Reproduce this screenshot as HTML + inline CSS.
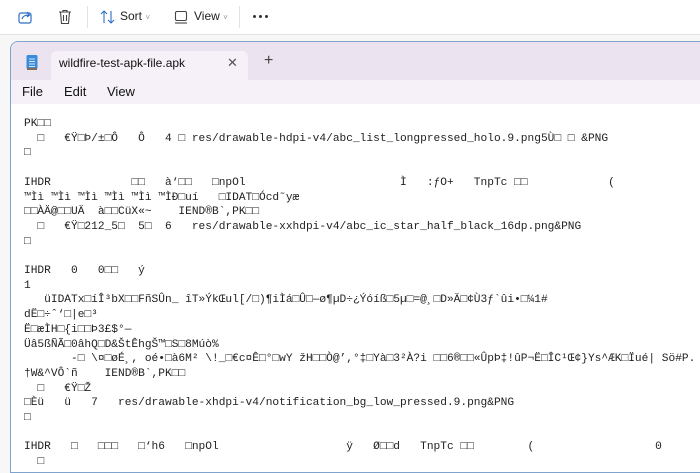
<!DOCTYPE html>
<html><head><meta charset="utf-8"><style>
body{margin:0;width:700px;height:466px;overflow:hidden;background:#f7f7f7;font-family:"Segoe UI","Liberation Sans",sans-serif;position:relative}
.tb{position:absolute;left:0;top:0;width:700px;height:34px;background:#fff;border-bottom:1px solid #e3e3e3}
.tb span{position:absolute;top:9px;font-size:12px;color:#222}
.win{position:absolute;left:10px;top:41px;width:700px;height:430px;border:1px solid #7fa3cc;border-radius:8px 0 0 0;background:#fff;overflow:hidden}
.title{height:38px;background:#ebe3f0}
.tab{position:absolute;left:40px;top:9px;width:197px;height:30px;background:#f6f1f8;border-radius:6px 6px 0 0}
.menu{position:absolute;top:38px;left:0;width:700px;height:24px;background:#f6f1f8;font-size:13px;color:#111}
.menu span{position:absolute;top:4px}
pre{position:absolute;left:13px;top:75px;margin:0;font-family:"Liberation Mono","DejaVu Sans Mono",monospace;font-size:11.2px;line-height:14.7px;color:#222;white-space:pre}
.dot{position:absolute;top:15px;width:3px;height:3px;border-radius:50%;background:#333}
</style></head><body>
<div class="tb">
<svg style="position:absolute;left:17px;top:9px" width="16" height="16" viewBox="0 0 16 16" fill="none" stroke="#2d6fc4" stroke-width="1.2"><rect x="2" y="4" width="12" height="10" rx="2"/><path d="M5 10c1-3 3-4 7-4M10 3l2.5 3L10 8"/></svg>
<svg style="position:absolute;left:58px;top:9px" width="14" height="16" viewBox="0 0 14 16" fill="none" stroke="#444" stroke-width="1.1"><path d="M1 3h12M5 3V1.5h4V3M2.5 3l1 11.5h7l1-11.5M5.5 6v6M8.5 6v6"/></svg>
<div style="position:absolute;left:87px;top:6px;width:1px;height:22px;background:#e3e3e3"></div>
<svg style="position:absolute;left:100px;top:10px" width="16" height="14" viewBox="0 0 16 14" fill="none" stroke="#2d6fc4" stroke-width="1.1"><path d="M4 13V1M1 4l3-3 3 3M11 1v12M8 10l3 3 3-3"/></svg>
<span style="left:120px">Sort <small style="color:#999;font-size:8px">˅</small></span>
<svg style="position:absolute;left:174px;top:10px" width="14" height="14" viewBox="0 0 14 14" fill="none" stroke="#444" stroke-width="1.1"><rect x="1.5" y="1.5" width="11" height="9" rx="1.5"/><path d="M1 13h12"/></svg>
<span style="left:194px">View <small style="color:#999;font-size:8px">˅</small></span>
<div style="position:absolute;left:239px;top:6px;width:1px;height:22px;background:#e3e3e3"></div>
<div class="dot" style="left:253px"></div><div class="dot" style="left:259px"></div><div class="dot" style="left:265px"></div>
</div>
<div class="win">
<div class="title"></div>
<svg style="position:absolute;left:15px;top:12px" width="12" height="16" viewBox="0 0 12 16"><rect x="0.5" y="1" width="11" height="14" rx="1.5" fill="#3a8bd8"/><path d="M3 5h6M3 7.5h6M3 10h6M3 12.5h6" stroke="#cde4fa" stroke-width="1"/><rect x="1" y="14" width="10" height="2" fill="#8a6a50"/></svg>
<div class="tab"><span style="position:absolute;left:8px;top:5px;font-size:12px;color:#111">wildfire-test-apk-file.apk</span><span style="position:absolute;left:176px;top:4px;font-size:13px;color:#555">✕</span></div>
<span style="position:absolute;left:253px;top:10px;font-size:16px;color:#444">+</span>
<div class="menu"><span style="left:11px">File</span><span style="left:53px">Edit</span><span style="left:96px">View</span></div>
<pre>PK□□
  □   €Ÿ□Þ/±□Ô   Ô   4 □ res/drawable-hdpi-v4/abc_list_longpressed_holo.9.png5Ù□ □ &amp;PNG
□

IHDR            □□   à‘□□   □npOl                       Ì   :ƒO+   TnpTc □□            (
™Ìì ™Ìì ™Ìì ™Ìì ™Ìì ™ÌÐ□uí   □IDAT□Ócd˜yæ
□□ÀÄ@□□UÄ  à□□CüX«~    IEND®B`,PK□□
  □   €Ÿ□212_5□  5□  6   res/drawable-xxhdpi-v4/abc_ic_star_half_black_16dp.png&amp;PNG
□

IHDR   0   0□□   ý
1
   üIDATx□íÎ³bX□□FñSÛn_ îT»ÝkŒul[/□)¶iÌá□Û□—ø¶µD÷¿Ýóíß□5µ□=@¸□D»Ä□¢Ù3ƒ`ûi•□¼1#
dË□÷ˆ‘□|e□³
Ë□æÌH□{i□□Þ3£$°—
Üâ5ßÑÃ□0âhQ□D&amp;ŠtÊhgŠ™□S□8Múò%
       -□ \¤□øÉ¸, oé•□à6M² \!_□€c¤Ê□°□wY žH□□Ò@’,°‡□Yà□3²À?i □□6®□□«ÛpÞ‡!ûP¬Ë□ÎC¹Œ¢}Ys^ÆK□Ïué| Sö#P.
†W&amp;^VÔ`ñ    IEND®B`,PK□□
  □   €Ÿ□Ž
□Èü   ü   7   res/drawable-xhdpi-v4/notification_bg_low_pressed.9.png&amp;PNG
□

IHDR   □   □□□   □‘h6   □npOl                   ÿ   Ø□□d   TnpTc □□        (                  0
  □</pre>
</div>
</body></html>
